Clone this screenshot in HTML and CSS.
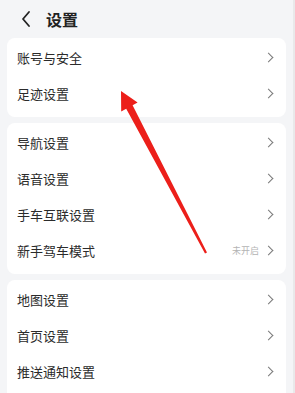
FILE: index.html
```html
<!DOCTYPE html>
<html lang="zh-CN">
<head>
    <meta charset="UTF-8">
    <meta name="viewport" content="width=device-width, initial-scale=1.0">
    <title>设置</title>
    <link rel="stylesheet" href="styles.css">
</head>
<body>
    <div class="page">
        <div class="header">
            <svg class="back" width="12" height="18" viewBox="0 0 12 18">
                <path d="M9 2 L3 9 L9 16" fill="none" stroke="#222" stroke-width="1.8" stroke-linecap="round" stroke-linejoin="round"/>
            </svg>
            <span class="title">设置</span>
        </div>

        <div class="card">
            <div class="row"><span class="label">账号与安全</span><span class="chev"></span></div>
            <div class="row"><span class="label">足迹设置</span><span class="chev"></span></div>
        </div>

        <div class="card">
            <div class="row"><span class="label">导航设置</span><span class="chev"></span></div>
            <div class="row"><span class="label">语音设置</span><span class="chev"></span></div>
            <div class="row"><span class="label">手车互联设置</span><span class="chev"></span></div>
            <div class="row"><span class="label">新手驾车模式</span><span class="state">未开启</span><span class="chev"></span></div>
        </div>

        <div class="card last">
            <div class="row"><span class="label">地图设置</span><span class="chev"></span></div>
            <div class="row"><span class="label">首页设置</span><span class="chev"></span></div>
            <div class="row"><span class="label">推送通知设置</span><span class="chev"></span></div>
        </div>

        <!-- annotation arrow -->
        <svg class="arrow" width="295" height="393" viewBox="0 0 295 393">
            <polygon points="121,91 137.6,102.6 132.6,105.3 207,252.4 205,253.6 126.2,108.8 121.2,111.4" fill="#ec1f1a"/>
        </svg>
    </div>
</body>
</html>
```

FILE: styles.css
```css
html, body {
    margin: 0;
    padding: 0;
}
body {
    font-family: "Noto Sans CJK SC", "Noto Sans", sans-serif;
    background-color: #f4f5f7;
    color: #2b2b2b;
    overflow: hidden;
}
.page {
    position: relative;
    width: 295px;
    height: 393px;
    padding: 0 7px;
    box-sizing: border-box;
    border-right: 2px solid #e9e9ea;
    overflow: hidden;
}
.header {
    height: 38px;
    display: flex;
    align-items: center;
    padding-left: 13px;
}
.back {
    margin-right: 14px;
}
.title {
    font-size: 16px;
    font-weight: bold;
    color: #222;
}
.card {
    background-color: #fff;
    border-radius: 8px;
    padding: 1px 0 6px;
    margin-bottom: 6px;
}
.card.last {
    padding-bottom: 12px;
}
.row {
    height: 36px;
    display: flex;
    align-items: center;
    padding: 0 14px 0 10px;
}
.label {
    flex: 1;
    font-size: 13px;
}
.state {
    font-size: 9px;
    color: #b4b4b4;
    margin-right: 6px;
}
.chev {
    width: 6px;
    height: 6px;
    border-top: 1px solid #7a7a7a;
    border-right: 1px solid #7a7a7a;
    transform: rotate(45deg);
}
.arrow {
    position: absolute;
    left: 0;
    top: 0;
    pointer-events: none;
}
```
